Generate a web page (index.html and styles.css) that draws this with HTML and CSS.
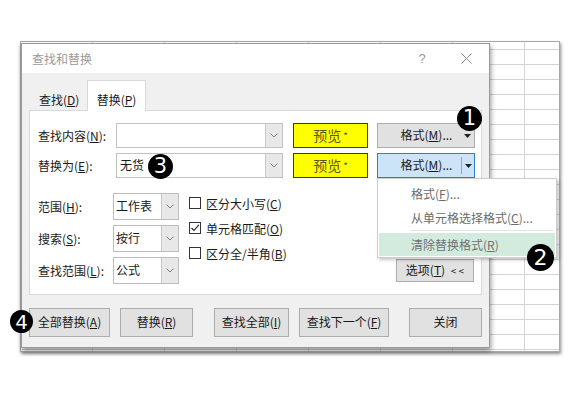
FILE: index.html
```html
<!DOCTYPE html>
<html lang="zh-CN">
<head>
<meta charset="utf-8">
<title>查找和替换</title>
<link rel="stylesheet" href="styles.css">
</head>
<body>
<div class="desk">
  <div class="sheet"></div>

  <div class="dialog">
    <div class="titlebar">
      <span class="title">查找和替换</span>
      <span class="help">?</span>
      <span class="close"><svg width="11" height="11" viewBox="0 0 11 11"><path d="M0.5 0.5 L10.5 10.5 M10.5 0.5 L0.5 10.5" stroke="#8c8c8c" stroke-width="1" fill="none"/></svg></span>
    </div>
    <div class="body">
      <div class="tabs">
        <div class="tab">查找(<u>D</u>)</div>
        <div class="tab active">替换(<u>P</u>)</div>
      </div>
      <div class="panel">
        <div class="row">
          <span class="lbl">查找内容(<u>N</u>):</span>
          <div class="input">
            <span class="val"></span>
            <span class="drop"><svg width="8" height="5" viewBox="0 0 8 5"><path d="M0.5 0.5 L4 4 L7.5 0.5" stroke="#808080" fill="none"/></svg></span>
          </div>
          <div class="preview">预览<span class="ast">*</span></div>
          <div class="fmt">
            <span class="ft">格式(<u>M</u>)...</span>
            <span class="arr"><svg width="7" height="4" viewBox="0 0 7 4"><path d="M0 0 L7 0 L3.5 4 Z" fill="#222"/></svg></span>
          </div>
        </div>
        <div class="row">
          <span class="lbl">替换为(<u>E</u>):</span>
          <div class="input">
            <span class="val">无货</span>
            <span class="drop"><svg width="8" height="5" viewBox="0 0 8 5"><path d="M0.5 0.5 L4 4 L7.5 0.5" stroke="#808080" fill="none"/></svg></span>
          </div>
          <div class="preview">预览<span class="ast">*</span></div>
          <div class="fmt hot">
            <span class="ft">格式(<u>M</u>)...</span>
            <span class="arr split"><svg width="7" height="4" viewBox="0 0 7 4"><path d="M0 0 L7 0 L3.5 4 Z" fill="#222"/></svg></span>
          </div>
        </div>
        <div class="opts">
          <div class="combos">
            <div class="crow">
              <span class="clbl">范围(<u>H</u>):</span>
              <div class="combo"><span class="cval">工作表</span><span class="cdrop"><svg width="8" height="5" viewBox="0 0 8 5"><path d="M0.5 0.5 L4 4 L7.5 0.5" stroke="#808080" fill="none"/></svg></span></div>
            </div>
            <div class="crow">
              <span class="clbl">搜索(<u>S</u>):</span>
              <div class="combo"><span class="cval">按行</span><span class="cdrop"><svg width="8" height="5" viewBox="0 0 8 5"><path d="M0.5 0.5 L4 4 L7.5 0.5" stroke="#808080" fill="none"/></svg></span></div>
            </div>
            <div class="crow">
              <span class="clbl">查找范围(<u>L</u>):</span>
              <div class="combo"><span class="cval">公式</span><span class="cdrop"><svg width="8" height="5" viewBox="0 0 8 5"><path d="M0.5 0.5 L4 4 L7.5 0.5" stroke="#808080" fill="none"/></svg></span></div>
            </div>
          </div>
          <div class="checks">
            <div class="chk"><span class="box"></span>区分大小写(<u>C</u>)</div>
            <div class="chk"><span class="box"><svg width="10" height="10" viewBox="0 0 10 10"><path d="M1.5 5 L4 7.5 L8.8 1.8" stroke="#222" stroke-width="1.1" fill="none"/></svg></span>单元格匹配(<u>O</u>)</div>
            <div class="chk"><span class="box"></span>区分全/半角(<u>B</u>)</div>
          </div>
          <div class="optbtn">选项(<u>T</u>) <span class="lt">&lt; &lt;</span></div>
        </div>
      </div>
      <div class="buttons">
        <div class="btn w81">全部替换(<u>A</u>)</div>
        <div class="btn w73 g10">替换(<u>R</u>)</div>
        <div class="btn w75 g21">查找全部(<u>I</u>)</div>
        <div class="btn w90 g10">查找下一个(<u>F</u>)</div>
        <div class="btn w73 g20">关闭</div>
      </div>
    </div>
  </div>

  <div class="menu">
    <div class="mi i1">格式(<u>F</u>)...</div>
    <div class="mi i2">从单元格选择格式(<u>C</u>)...</div>
    <div class="msep"></div>
    <div class="mi i3">清除替换格式(<u>R</u>)</div>
  </div>

  <div class="badge b1">1</div>
  <div class="badge b2">2</div>
  <div class="badge b3">3</div>
  <div class="badge b4">4</div>
</div>
</body>
</html>
```

FILE: styles.css
```css
html, body {
  margin: 0;
  padding: 0;
}
body {
  width: 582px;
  height: 393px;
  overflow: hidden;
  background: #ffffff;
  font-family: "Noto Sans CJK SC", "Noto Sans", sans-serif;
  font-size: 12px;
  color: #1a1a1a;
}
u {
  text-decoration: underline;
  text-underline-offset: 1px;
}
.desk {
  position: relative;
  width: 582px;
  height: 393px;
}

/* spreadsheet behind the dialog */
.sheet {
  position: absolute;
  left: 20px;
  top: 41px;
  width: 540px;
  height: 311px;
  box-sizing: border-box;
  border: 1px solid #a8a8a8;
  background-color: #fff;
  background-image:
    linear-gradient(to right, #d4d4d4 1px, transparent 1px),
    linear-gradient(to bottom, #d4d4d4 1px, transparent 1px);
  background-size: 72px 15px;
  background-position: 71px 7px;
  box-shadow: 1px 2px 3px rgba(0, 0, 0, 0.45);
}

/* dialog window */
.dialog {
  position: absolute;
  left: 21px;
  top: 43px;
  width: 469px;
  height: 305px;
  box-sizing: border-box;
  border: 1px solid #9a9a9a;
  background: #f0f0f0;
  box-shadow: 1px 3px 5px rgba(0, 0, 0, 0.4);
  display: flex;
  flex-direction: column;
}
.titlebar {
  height: 29px;
  flex: none;
  background: #ffffff;
  display: flex;
  align-items: center;
  padding: 0 13px 0 10px;
  color: #9a9a9a;
  font-size: 12px;
}
.title {
  flex: 1;
}
.help {
  width: 20px;
  text-align: center;
  margin-right: 24px;
  font-family: "Liberation Sans", sans-serif;
  font-size: 13px;
  color: #9a9a9a;
}
.close {
  width: 20px;
  height: 11px;
  display: flex;
  justify-content: center;
}
.body {
  flex: 1;
  padding: 0 7px;
  display: flex;
  flex-direction: column;
}
.tabs {
  height: 37px;
  flex: none;
  display: flex;
  align-items: flex-end;
}
.tab {
  width: 58px;
  height: 30px;
  box-sizing: border-box;
  padding: 12px 0 0 10px;
  line-height: 16px;
}
.tab.active {
  width: 59px;
  height: 31px;
  margin-bottom: -1px;
  padding: 11px 0 0 0;
  text-align: center;
  background: #ffffff;
  border: 1px solid #d9d9d9;
  border-bottom: none;
  position: relative;
  z-index: 1;
}
.panel {
  height: 185px;
  flex: none;
  box-sizing: border-box;
  background: #ffffff;
  border: 1px solid #d9d9d9;
  padding: 12px 6px 0 8px;
}
.row {
  display: flex;
  align-items: center;
  height: 25px;
}
.row + .row {
  margin-top: 5px;
}
.lbl {
  width: 78px;
}
.input {
  width: 167px;
  height: 25px;
  box-sizing: border-box;
  border: 1px solid #c2c2c2;
  display: flex;
  background: #ffffff;
}
.val {
  flex: 1;
  padding-left: 3px;
  line-height: 22px;
}
.drop, .cdrop {
  width: 16px;
  border-left: 1px solid #c8c8c8;
  background: #e8e8e8;
  display: flex;
  align-items: center;
  justify-content: center;
}
.preview {
  margin-left: 10px;
  width: 75px;
  height: 25px;
  box-sizing: border-box;
  border: 1px solid #3a3a3a;
  background: #ffff00;
  text-align: center;
  font-size: 14px;
  line-height: 22px;
  color: #58581c;
}
.ast {
  font-size: 10px;
  margin-left: 2px;
  vertical-align: 1px;
}
.fmt {
  margin-left: 9px;
  width: 98px;
  height: 25px;
  box-sizing: border-box;
  border: 1px solid #adadad;
  background: #e1e1e1;
  display: flex;
  align-items: stretch;
}
.fmt.hot {
  background: #cce4f7;
  border-color: #2f7fc6;
}
.ft {
  width: 83px;
  box-sizing: border-box;
  padding-left: 14px;
  text-align: center;
  line-height: 22px;
}
.arr {
  flex: 1;
  display: flex;
  align-items: center;
  justify-content: center;
}
.arr.split {
  border-left: 1px solid #8ea7bd;
  margin: 3px 0;
}
.opts {
  display: flex;
  margin-top: 15px;
  height: 91px;
}
.combos {
  display: flex;
  flex-direction: column;
  gap: 5px;
}
.crow {
  display: flex;
  align-items: center;
  height: 27px;
}
.clbl {
  width: 75px;
}
.combo {
  width: 66px;
  height: 27px;
  box-sizing: border-box;
  border: 1px solid #bdbdbd;
  display: flex;
  background: #ffffff;
}
.cval {
  flex: 1;
  padding-left: 2px;
  line-height: 24px;
  font-size: 12px;
}
.checks {
  margin-left: 10px;
  display: flex;
  flex-direction: column;
  gap: 5px;
}
.chk {
  display: flex;
  align-items: center;
  height: 20px;
}
.box {
  width: 12px;
  height: 12px;
  box-sizing: border-box;
  border: 1px solid #333333;
  margin-right: 5px;
  display: flex;
  align-items: center;
  justify-content: center;
}
.optbtn {
  margin-left: auto;
  margin-right: 1px;
  margin-bottom: 2px;
  align-self: flex-end;
  width: 78px;
  height: 23px;
  box-sizing: border-box;
  border: 1px solid #adadad;
  background: #e1e1e1;
  text-align: center;
  line-height: 20px;
}
.lt {
  font-size: 10px;
  margin-left: 3px;
}
.buttons {
  display: flex;
  margin-top: 13px;
}
.btn {
  height: 29px;
  box-sizing: border-box;
  border: 1px solid #adadad;
  background: #e1e1e1;
  text-align: center;
  line-height: 26px;
}
.w81 { width: 81px; }
.w73 { width: 73px; }
.w75 { width: 75px; }
.w90 { width: 90px; }
.g10 { margin-left: 10px; }
.g20 { margin-left: 20px; }
.g21 { margin-left: 21px; }

/* dropdown menu */
.menu {
  position: absolute;
  left: 377px;
  top: 178px;
  width: 180px;
  height: 80px;
  box-sizing: border-box;
  border: 1px solid #cdcdcd;
  background: #ffffff;
  box-shadow: 2px 2px 3px rgba(0, 0, 0, 0.22);
  padding: 2px 1px 1px 1px;
}
.mi {
  padding-left: 32px;
  color: #6b6b6b;
}
.i1 { height: 25px; line-height: 25px; }
.i2 { height: 24px; line-height: 24px; }
.msep {
  height: 1px;
  background: #e2e2e2;
  margin: 0 2px 2px 31px;
}
.i3 {
  height: 23px;
  line-height: 23px;
  background: #d3ebdf;
  color: #707070;
}

/* numbered callouts */
.badge {
  position: absolute;
  border-radius: 50%;
  background: #000000;
  color: #ffffff;
  display: flex;
  align-items: center;
  justify-content: center;
  font-family: "DejaVu Sans", sans-serif;
  line-height: 1;
}
.b1 { left: 457px; top: 106px; width: 25px; height: 25px; font-size: 21px; }
.b2 { left: 527px; top: 244px; width: 27px; height: 27px; font-size: 22px; }
.b3 { left: 148px; top: 154px; width: 25px; height: 25px; font-size: 21px; }
.b4 { left: 10px; top: 310px; width: 23px; height: 23px; font-size: 20px; }
```
